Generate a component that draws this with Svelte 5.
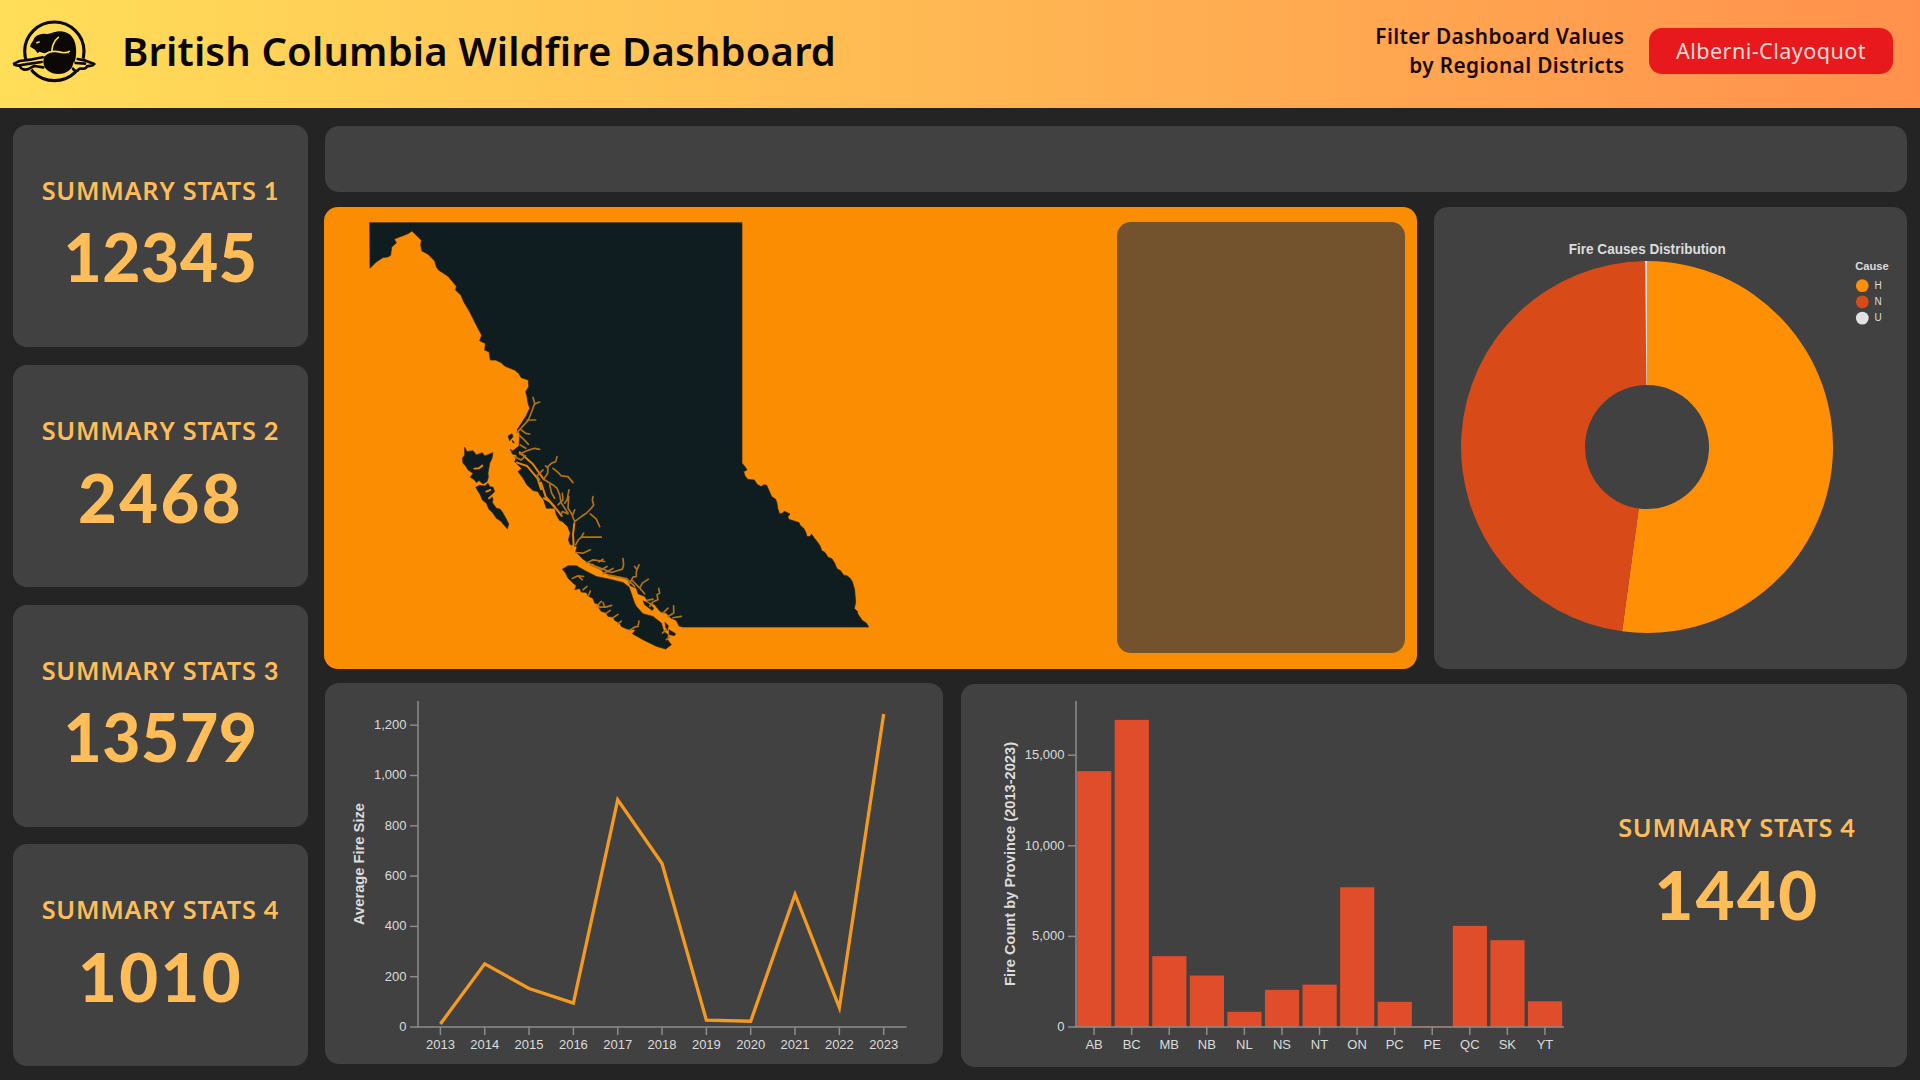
<script>
  const stats = [
    { label: 'SUMMARY STATS', n: '1', value: '12345' },
    { label: 'SUMMARY STATS', n: '2', value: '2468' },
    { label: 'SUMMARY STATS', n: '3', value: '13579' },
    { label: 'SUMMARY STATS', n: '4', value: '1010' }
  ];

  // average fire size per year
  const sizes = [
    [2013, 12], [2014, 251], [2015, 153], [2016, 95], [2017, 903], [2018, 650],
    [2019, 27], [2020, 23], [2021, 527], [2022, 77], [2023, 1245]
  ];
  const sizeTicks = [0, 200, 400, 600, 800, 1000, 1200];
  const lx = (i) => 115.4 + i * 44.33;
  const ly = (v) => 344 - v * 0.2515;
  const line = sizes.map(([, v], i) => `${lx(i)},${ly(v)}`).join(' ');

  // fire count per province
  const counts = [
    ['AB', 14120], ['BC', 16950], ['MB', 3910], ['NB', 2840], ['NL', 840], ['NS', 2050], ['NT', 2340],
    ['ON', 7710], ['PC', 1390], ['PE', 40], ['QC', 5580], ['SK', 4790], ['YT', 1420]
  ];
  const countTicks = [0, 5000, 10000, 15000];
  const bx = (i) => 116.1 + i * 37.57;
  const by = (v) => 343 - v * 0.01812;

  // donut slices as [start, end] in degrees clockwise from the top
  const slices = [
    { key: 'H', color: '#ff8f05', from: 0, to: 187.7 },
    { key: 'N', color: '#d84a17', from: 187.7, to: 359.4 },
    { key: 'U', color: '#e2e2e2', from: 359.4, to: 360 }
  ];
  const pt = (r, a) => {
    const t = (a * Math.PI) / 180;
    return `${(213 + r * Math.sin(t)).toFixed(2)} ${(240 - r * Math.cos(t)).toFixed(2)}`;
  };
  const arc = (s) => {
    const big = s.to - s.from > 180 ? 1 : 0;
    return `M${pt(186, s.from)}A186 186 0 ${big} 1 ${pt(186, s.to)}L${pt(62, s.to)}A62 62 0 ${big} 0 ${pt(62, s.from)}Z`;
  };
</script>

<div class="page">
  <header>
    <svg class="logo" viewBox="0 0 300 240" aria-hidden="true">
      <ellipse cx="148" cy="118" rx="89" ry="88" fill="none" stroke="#0c0803" stroke-width="9.5" />
      <path class="gap" d="M38 150L78 137L125 132L130 175L85 168L68 182ZM170 150L215 132L258 150L262 160L225 180L180 175Z" />
      <path class="log" d="M27 155L44 147L82 142C95 138 106 138 116 135M28 158C40 165 48 158 60 157L110 150M45 163C48 173 60 175 72 170L88 162L115 166M218 141L242 146L268 156C262 164 254 160 246 163C240 177 228 166 222 171C216 181 207 176 204 170M212 153L240 155" />
      <path class="ink" d="M76 104C75 97 84 89 88 78C95 68 107 65 121 65C134 68 142 60 162 58C184 57 200 68 208 86C216 108 215 136 207 154L190 120C170 116 152 117 142 120L118 124L103 119L98 124L90 113Z" />
      <ellipse class="ink" cx="160" cy="150" rx="45" ry="36" />
      <path class="cut" d="M116 131C128 120 140 116 158 119C172 123 184 125 193 118M160 76C151 82 148 90 144 99C141 106 142 113 140 118" />
      <path d="M93 91L103 87L105 91L95 95Z" fill="#ffe07a" />
    </svg>
    <h1>British Columbia Wildfire Dashboard</h1>
    <p class="hint">Filter Dashboard Values<br />by Regional Districts</p>
    <button>Alberni-Clayoquot</button>
  </header>

  <main>
    <aside>
      {#each stats as s}
        <section class="card stat">
          <div class="label">{s.label} <span>{s.n}</span></div>
          <div class="value" class:short={s.value.length < 5}>{s.value}</div>
        </section>
      {/each}
    </aside>

    <div class="content">
      <div class="card banner"></div>

      <div class="row middle">
        <section class="map">
          <svg class="bc" viewBox="13 20 3279 1388" preserveAspectRatio="none" aria-label="British Columbia">
            <path class="land" d="M150 67H1267V790L1276 800 1282 810 1272 815 1276 828 1284 838 1304 840 1312 853 1324 860 1334 854 1341 856 1348 872 1356 890 1368 898 1372 910 1374 925 1380 942 1388 940 1394 934 1411 942 1405 950 1407 958 1438 968 1442 977 1452 985 1458 996 1462 1010 1470 1010 1476 1003 1484 1015 1496 1030 1502 1040 1506 1052 1516 1058 1525 1072 1537 1077 1545 1090 1552 1107 1562 1112 1572 1126 1582 1128 1592 1136 1598 1146 1605 1170 1608 1208 1604 1226 1614 1236 1614 1242 1628 1262 1640 1270 1647 1282H1090L1078 1279 1070 1262 1052 1254 1040 1240 1022 1236 1005 1215 985 1206 975 1190 955 1182 950 1165 932 1158 925 1140 900 1130 870 1125 852 1118 840 1105 820 1092 805 1088 790 1078 768 1056 772 1040 752 1035 746 1020 752 1000 744 980 728 965 720 962 710 945 705 925 680 925 672 900 660 885 655 875 640 872 622 855 610 835 595 815 606 806 585 785 592 768 580 752 598 738 600 700 592 690 618 650 630 625 624 605 622 590 618 575 627 560 626 540 605 533 597 520 585 510 555 498 545 488 528 480 512 480 508 455 495 450 497 430 480 422 486 405 470 375 450 335 432 305 424 285 408 270 410 258 385 228 370 218 357 210 350 200 345 182 325 162 307 152 303 135 305 120 290 105 277 92 265 100 250 106 224 116 230 128 216 140 213 165 205 170 190 172 170 185 151 204Z" />
            <path class="land" d="M728 1108L745 1098 770 1098 795 1112 830 1130 870 1138 910 1148 928 1162 938 1190 944 1208 950 1220 970 1242 1000 1250 1025 1270 1029 1283 1032 1295 1045 1305 1042 1318 1055 1335 1038 1348 1010 1340 970 1320 938 1302 948 1290 922 1288 905 1280 900 1270 885 1262 880 1252 865 1250 858 1238 845 1235 838 1225 840 1215 825 1210 820 1196 805 1188 800 1178 785 1177 780 1166 765 1170 770 1158 760 1150 745 1135 738 1120Z" />
            <path class="land" d="M435 742L442 755 460 752 470 765 488 758 495 768 520 758 517 775 510 790 505 820 506 832 502 845 490 852 478 842 470 848 465 840 452 832 460 820 445 810 438 798 430 790 428 775 435 765Z" />
            <path class="land" d="M468 862L480 856 495 858 505 850 510 860 520 862 525 875 515 885 520 898 518 908 530 925 542 928 550 940 560 958 567 972 563 987 550 972 545 965 530 955 520 940 508 928 500 910 488 900 482 885Z" />
            <path class="land" d="M565 708L577 701 580 710 570 722ZM578 721L584 727 580 729ZM970 1203L985 1210 1002 1225 998 1232 975 1215ZM1036 1268L1046 1278 1043 1292 1038 1282ZM1048 1290L1068 1302 1064 1308 1048 1304ZM572 748L584 756 590 765 578 762Z" />
            <path class="water wide" d="M592 788L622 798 654 836 664 868M664 848L678 890 705 920M600 757L640 793 672 838M672 895L690 905 712 930 726 948M752 1050L762 1035 760 1005 764 970" />
            <path class="water" d="M592 698L608 680 625 662 638 630 645 610 640 592M645 612L660 606M622 660L648 660M605 690L618 700 630 702M600 707L616 722 626 733M602 735L618 745M600 762L622 752 645 745 660 748M584 770L605 780 618 768 600 762M672 838L684 820 685 800 695 790 708 785 712 770M685 805L678 798M700 805L716 818 725 828 745 830 760 848M672 838L700 855 712 865 720 885 724 908 745 940M660 840L652 828 670 810M690 855L696 880 705 895M735 910L742 900 748 870M715 915L730 900 728 880M765 965L785 950 800 940 815 925 822 915 818 900 820 890M812 942L830 958 840 980M765 965L755 940 745 925 747 890M758 948L765 930M768 1035L776 1020 785 1012 845 1012M785 1012L792 1000M768 1058L790 1060 812 1050M745 942L728 935 724 945" />
            <path class="water" d="M800 1090L820 1080 855 1085M838 1086L850 1078M812 1095L845 1110 862 1100M830 1100L875 1118 895 1112 908 1108 912 1095 910 1076M850 1122L880 1106M866 1126L920 1136 945 1160M930 1150L940 1132 950 1130 950 1115 958 1095M952 1110L945 1100M938 1142L960 1165 968 1150 986 1138M960 1165L975 1182M990 1220L1000 1206 1015 1200 1012 1185 1020 1180 1017 1166M1030 1240L1045 1225M1045 1250L1062 1240 1062 1218M1060 1254L1085 1250M982 1202L1000 1198" />
            <path class="water" d="M758 1136L775 1128 792 1130M775 1128L788 1140M790 1170L802 1160M806 1188L812 1174M832 1218L845 1205M838 1222L858 1222 876 1217M855 1222L850 1208M860 1240L872 1232M880 1254L895 1244M930 1292L945 1282 955 1280 958 1264M1028 1300L1040 1290M1040 1320L1050 1312M895 1272L905 1264" />
            <path class="water wide" d="M464 806L478 805 488 797M500 875L512 870M508 895L516 888" />
          </svg>
          <div class="panel"></div>
        </section>

        <section class="card causes">
          <svg viewBox="0 0 473 462" aria-label="Fire causes">
            <text class="title" x="213.2" y="47" text-anchor="middle" textLength="157" lengthAdjust="spacingAndGlyphs">Fire Causes Distribution</text>
            {#each slices as s, i}
              <path d={arc(s)} fill={s.color} />
              <circle cx="428.3" cy={78.7 + i * 16.2} r="6.4" fill={s.color} />
              <text class="key" x="440.5" y={81.7 + i * 16.2}>{s.key}</text>
            {/each}
            <text class="legend" x="421.2" y="63" textLength="33.5">Cause</text>
          </svg>
        </section>
      </div>

      <div class="row bottom">
        <section class="card trend">
          <svg viewBox="0 0 618 381" aria-label="Average fire size by year">
            <path class="axis" d="M93 18V344H581.5" />
            {#each sizeTicks as t}
              <path class="axis" d={`M85 ${ly(t)}H93`} />
              <text class="tick" x="81.5" y={ly(t) + 3.8} text-anchor="end">{t.toLocaleString('en-US')}</text>
            {/each}
            {#each sizes as [year], i}
              <path class="axis" d={`M${lx(i)} 344V352`} />
              <text class="tick" x={lx(i)} y="366" text-anchor="middle">{year}</text>
            {/each}
            <polyline points={line} />
            <text class="name" transform="translate(39 181) rotate(-90)" text-anchor="middle" textLength="122" lengthAdjust="spacingAndGlyphs">Average Fire Size</text>
          </svg>
        </section>

        <section class="card provinces">
          <svg viewBox="0 0 620 383" aria-label="Fire count by province">
            {#each counts as [name, v], i}
              <rect x={bx(i)} y={by(v)} width="34.2" height={343 - by(v)} fill="#e04d2a" />
              <path class="axis" d={`M${bx(i) + 17} 343V351`} />
              <text class="tick" x={bx(i) + 17} y="365" text-anchor="middle">{name}</text>
            {/each}
            <path class="axis" d="M115 17V343H603" />
            {#each countTicks as t}
              <path class="axis" d={`M107 ${by(t)}H115`} />
              <text class="tick" x="103.5" y={by(t) + 3.8} text-anchor="end">{t.toLocaleString('en-US')}</text>
            {/each}
            <text class="name" transform="translate(53.5 180) rotate(-90)" text-anchor="middle" textLength="244" lengthAdjust="spacingAndGlyphs">Fire Count by Province (2013-2023)</text>
          </svg>
          <div class="stat side">
            <div class="label">SUMMARY STATS <span>4</span></div>
            <div class="value short">1440</div>
          </div>
        </section>
      </div>
    </div>
  </main>
</div>

<style>
  :global(body) { margin: 0; background: #242424; }
  .page {
    width: 1920px; height: 1080px; overflow: hidden;
    display: flex; flex-direction: column;
    background: #242424; font-family: "Noto Sans", sans-serif;
  }
  header {
    height: 108px; flex: none; box-sizing: border-box; padding: 0 27px 0 5px;
    display: flex; align-items: center;
    background: linear-gradient(90deg, #ffde59, #ff914d);
  }
  .logo { width: 100px; height: 80px; margin-bottom: 4px; flex: none; }
  .ink { fill: #0c0803; }
  .gap { fill: #ffdc59; }
  .log { fill: none; stroke: #0c0803; stroke-width: 8; stroke-linejoin: round; stroke-linecap: round; }
  .cut { fill: none; stroke: #ffdc59; stroke-width: 5; stroke-linecap: round; }
  h1 {
    margin: 0 auto 6px 17px; font-size: 40px; font-weight: 600; line-height: 50px; letter-spacing: 0.15px;
    color: #0a0602; white-space: nowrap;
  }
  .hint {
    margin: 0 24.5px 6px 0; text-align: right; white-space: nowrap; letter-spacing: 0.38px;
    font-size: 20.8px; line-height: 29px; font-weight: 600; color: #1a0903;
  }
  button {
    width: 244px; height: 46px; margin: 0 0 6px; padding: 0; border: 0; border-radius: 13px;
    background: #e8191d; color: #fbd9d6; font: 400 21.6px/46px "Noto Sans", sans-serif; letter-spacing: 0.45px;
  }
  main { flex: 1; display: flex; gap: 17px; padding: 17px 13px 0; }
  aside { width: 295px; flex: none; display: flex; flex-direction: column; gap: 17.8px; }
  .card { background: #414141; border-radius: 14px; }
  .stat { height: 222px; text-align: center; color: #ffbd59; white-space: nowrap; }
  .label { padding-top: 47px; font-size: 25.4px; line-height: 36px; font-weight: 600; letter-spacing: 0.7px; }
  .label span { font-family: Lato, sans-serif; font-weight: 700; }
  .value { font: 900 66px/80px Lato, sans-serif; padding-top: 9px; letter-spacing: 0.5px; }
  .value.short { font-size: 67px; letter-spacing: 2.4px; }
  .content { width: 1582px; display: flex; flex-direction: column; }
  .banner { height: 66px; margin: 1px 0 15px; }
  .row { display: flex; }
  .middle { gap: 17px; height: 462px; }
  .map {
    position: relative; width: 1093px; flex: none; margin-left: -1px; border-radius: 14px; overflow: hidden;
    background: #fa8d02; display: flex; justify-content: flex-end; align-items: flex-start;
  }
  .bc { position: absolute; inset: 0; width: 1093px; height: 462px; }
  .land { fill: #101d20; stroke: #2b2415; stroke-width: 2; stroke-linejoin: round; }
  .water { fill: none; stroke: #b0721c; stroke-width: 5; stroke-linecap: round; stroke-linejoin: round; }
  .wide { stroke: #e88506; stroke-width: 6; }
  .panel { width: 288px; height: 431px; margin: 15px 12.5px 0 0; border-radius: 14px; background: #73532e; position: relative; }
  .causes { width: 473px; }
  .causes svg { display: block; width: 473px; height: 462px; }
  .bottom { margin-top: 14px; gap: 18px; }
  .trend { width: 618px; height: 381px; }
  .trend svg { display: block; width: 618px; height: 381px; }
  .provinces { width: 946px; height: 383px; margin-top: 1px; display: flex; }
  .provinces svg { display: block; width: 620px; height: 383px; flex: none; }
  .side { flex: 1; height: auto; padding: 78px 14px 0 0; }
  text { font-family: "Liberation Sans", Arial, sans-serif; fill: #dcdcdc; }
  .title { font-size: 14.2px; font-weight: 700; }
  .legend { font-size: 11.2px; font-weight: 700; }
  .key { font-size: 10px; }
  .tick { font-size: 13px; }
  .name { font-size: 14.6px; font-weight: 700; }
  .axis { fill: none; stroke: #8c8c8c; stroke-width: 1.5; }
  polyline { fill: none; stroke: #f59a21; stroke-width: 3.3; stroke-linejoin: miter; stroke-miterlimit: 20; }
</style>
